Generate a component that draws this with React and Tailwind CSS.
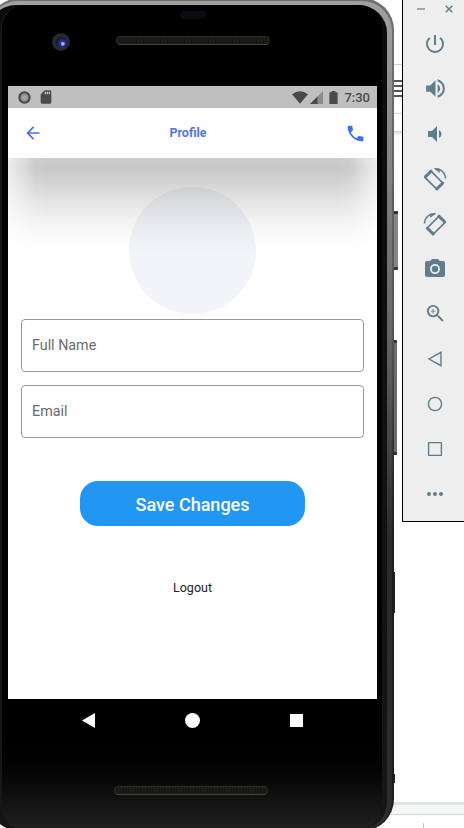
import React from "react";
import {
  MdPowerSettingsNew,
  MdVolumeUp,
  MdVolumeDown,
  MdCameraAlt,
  MdZoomIn,
  MdPhone,
  MdArrowBack,
  MdSdCard,
} from "react-icons/md";

function Speaker({ className }) {
  return (
    <div
      className={`h-[9px] w-[154px] rounded-full border border-[#2e2c26] border-b-[#47443b] bg-[#1a1915] bg-[repeating-linear-gradient(90deg,#211f1b_0_1px,#181713_1px_3px)] ${className}`}
    />
  );
}

function StatusBar() {
  return (
    <div className="flex h-[22px] items-center bg-[#bfbfbf] pl-[10px] pr-[7px] text-[#4a4a4a]">
      <svg width="13" height="13" viewBox="0 0 13 13">
        <circle cx="6.5" cy="6.5" r="5.2" fill="#8b8b8b" stroke="#4a4a4a" strokeWidth="2" />
        <circle cx="6.5" cy="6.5" r="2.6" fill="#a3a3a3" />
      </svg>
      <MdSdCard className="ml-[7px] h-[16px] w-[16px]" />
      <div className="ml-auto flex items-center">
        <svg width="16" height="13" viewBox="0 0 16 13">
          <path d="M0 3.2Q8-2.8 16 3.2L8 12.8Z" fill="#4a4a4a" />
        </svg>
        <svg className="ml-[2px]" width="13" height="13" viewBox="0 0 13 13">
          <path d="M13 0V13H0Z" fill="#8d8d8d" />
          <path d="M7.5 5.5V13H0Z" fill="#4a4a4a" />
        </svg>
        <svg className="ml-[6px]" width="9" height="13" viewBox="0 0 9 13">
          <path d="M2.5 0h4v1.3H8.6V13H.4V1.300H2.500Z" fill="#4a4a4a" />
        </svg>
        <span className="ml-[6px] pt-[1px] text-[13px] font-medium leading-[21px]">7:30</span>
      </div>
    </div>
  );
}

function Field({ label }) {
  return (
    <div className="flex h-[53px] items-center rounded-[4px] border border-[#999] px-[10px] text-[14.3px] text-[#6a6a6a]">
      {label}
    </div>
  );
}

function Screen() {
  return (
    <div className="flex h-[613px] w-[369px] flex-col overflow-hidden bg-white">
      <StatusBar />
      <div className="relative z-10 grid h-[50px] shrink-0 grid-cols-[80px_1fr_80px] items-center bg-white">
        <MdArrowBack className="ml-[15px] h-[20px] w-[20px] text-[#4e70ea]" />
        <span className="pr-[9px] text-center text-[12.5px] font-bold text-[#4f75ea]">Profile</span>
        <MdPhone className="ml-auto mr-[11px] h-[21px] w-[21px] text-[#3f70ee]" />
        <div className="pointer-events-none absolute inset-x-0 top-full h-[95px] bg-[linear-gradient(180deg,rgba(0,0,0,0.2)_0,rgba(0,0,0,0.22)_10px,rgba(0,0,0,0.18)_22px,rgba(0,0,0,0.11)_42px,rgba(0,0,0,0.05)_62px,rgba(0,0,0,0.015)_80px,transparent_95px)] [mask-image:linear-gradient(90deg,rgba(0,0,0,0.35)_0,rgba(0,0,0,0.6)_13px,rgba(0,0,0,0.93)_27px,#000_40px,#000_calc(100%-40px),rgba(0,0,0,0.93)_calc(100%-27px),rgba(0,0,0,0.6)_calc(100%-13px),rgba(0,0,0,0.35)_100%)]" />
      </div>
      <div className="mt-[29px] flex justify-center">
        <div className="mr-[1px] h-[127px] w-[127px] rounded-full bg-[#f2f4f9]" />
      </div>
      <div className="mt-[5px] flex flex-col gap-[13px] pl-[13px] pr-[13px]">
        <Field label="Full Name" />
        <Field label="Email" />
      </div>
      <button className="mt-[43px] h-[45px] w-[225px] self-center rounded-[18px] bg-[#2296f3] pt-[1px] text-[18px] font-medium text-white">
        Save Changes
      </button>
      <button className="mt-[52px] self-center text-[12.5px] leading-[20px] text-[#222]">Logout</button>
    </div>
  );
}

function NavBar() {
  return (
    <div className="flex h-[42px] w-[369px] items-center pl-[74px]">
      <svg width="13" height="15" viewBox="0 0 13 15">
        <path d="M13 0V15L0 7.500Z" fill="#fff" />
      </svg>
      <div className="ml-[90px] h-[15px] w-[15px] rounded-full bg-white" />
      <div className="ml-[90px] h-[13px] w-[13px] bg-white" />
    </div>
  );
}

function Phone() {
  return (
    <div className="absolute -left-[12px] -top-[2px] h-[833px] w-[406px] overflow-hidden rounded-[32px] bg-gradient-to-b from-[#707070] via-[#555] via-40% to-[#1c1c1c] to-65% pb-[1px] pr-[2px] pt-[3px]">
      <div className="h-full overflow-hidden rounded-[30px] bg-gradient-to-b from-[#a0a0a0] via-[#666] via-40% to-[#2b2b2b] to-65% pr-[5px] pt-[4px]">
        <div className="h-full rounded-[28px] bg-gradient-to-b from-[#0b0b0b] to-[#161616] pl-[12px] pr-[5px]">
          <div className="h-full rounded-[24px] border-l-2 border-l-[#171717] bg-gradient-to-b from-black from-87% to-[#222] pl-[6px]">
            <div className="flex h-[81px] items-start">
              <div className="ml-[44px] mt-[28px] flex h-[18px] w-[18px] items-center justify-center rounded-full bg-[#292929]">
                <div className="h-[11px] w-[11px] rounded-full bg-[radial-gradient(circle_at_62%_62%,#a6b3ff_0_12%,#29348d_25%,#0b0c2c_80%)]" />
              </div>
              <div className="ml-[46px] flex flex-col items-center pt-[6px]">
                <div className="h-[8px] w-[26px] rounded-full bg-[#0a0c14]" />
                <Speaker className="mt-[17px]" />
              </div>
            </div>
            <Screen />
            <NavBar />
            <Speaker className="ml-[106px] mt-[45px]" />
          </div>
        </div>
      </div>
    </div>
  );
}

function Rotate({ flip }) {
  return (
    <svg
      className={flip ? "-scale-x-100" : ""}
      width="24"
      height="24"
      viewBox="0 0 24 24"
      fill="none"
      stroke="currentColor"
    >
      <path d="M8 4.200L19.800 16L13.700 22.100L1.900 10.300Z" strokeWidth="1.700" strokeLinejoin="round" />
      <path d="M2.600 9.600L8 4.200M13.900 21.900L19.600 16.200" strokeWidth="3" strokeLinecap="round" />
      <path d="M12 2.200C17.500 1.200 22.300 5.500 22.500 11.500" strokeWidth="1.500" />
      <path d="M11.500 1.500L16.500 5.300L16.200 2Z" fill="currentColor" strokeWidth="0.800" />
    </svg>
  );
}

function Outline({ children }) {
  return (
    <svg width="18" height="18" viewBox="0 0 18 18" fill="none" stroke="currentColor" strokeWidth="1.400">
      {children}
    </svg>
  );
}

function Toolbar() {
  const tools = [
    <MdPowerSettingsNew className="h-[24px] w-[24px]" />,
    <MdVolumeUp className="h-[25px] w-[25px]" />,
    <MdVolumeDown className="h-[24px] w-[24px]" />,
    <Rotate />,
    <Rotate flip />,
    <MdCameraAlt className="h-[24px] w-[24px]" />,
    <MdZoomIn className="h-[23px] w-[23px]" />,
    <Outline><path d="M15 2.300V15.700L3 9Z" /></Outline>,
    <Outline><circle cx="9" cy="9" r="6.600" /></Outline>,
    <Outline><rect x="2.600" y="2.600" width="12.800" height="12.800" rx="0.500" /></Outline>,
    <svg width="18" height="6" viewBox="0 0 18 6" fill="currentColor">
      <circle cx="3" cy="3" r="2" />
      <circle cx="9" cy="3" r="2" />
      <circle cx="15" cy="3" r="2" />
    </svg>,
  ];
  return (
    <div className="absolute left-[402px] top-0 h-[522px] w-[62px] border-b border-l border-black bg-[#eee] text-[#607d8b]">
      <div className="flex h-[21px] items-center pb-[3px] pl-[14px]">
        <div className="h-[1.500px] w-[8px] bg-[#9aa9b0]" />
        <svg className="ml-[20px]" width="8" height="8" viewBox="0 0 8 8" stroke="currentColor" strokeWidth="1.500">
          <path d="M.7.7L7.300 7.300M7.300.7L.7 7.300" />
        </svg>
      </div>
      <div className="flex flex-col pl-[3px]">
        {tools.map((tool, i) => (
          <div key={i} className="flex h-[45px] items-center justify-center">{tool}</div>
        ))}
      </div>
    </div>
  );
}

function Backdrop() {
  return (
    <div className="flex h-full flex-col pl-[386px]">
      <div className="mt-[64px] h-px bg-[#cfcfcf]" />
      <div className="mt-[15px] flex flex-col gap-[3px]">
        <div className="h-[2px] bg-[#555]" />
        <div className="h-[2px] bg-[#555]" />
        <div className="h-[2px] bg-[#555]" />
        <div className="h-[2px] bg-[#555]" />
      </div>
      <div className="mt-[16px] h-[18px] border-t border-[#ddd] shadow-[0_2px_4px_rgba(0,0,0,0.2)]" />
      <div className="mt-auto h-[13px] border-b border-t-[3px] border-b-[#d5d7da] border-t-[#e2e4e7] bg-[#f6f7f9]" />
      <div className="ml-[37px] mt-[8px] h-[5px] w-px bg-[#c4c4c4]" />
    </div>
  );
}

export default function App() {
  return (
    <div className="relative h-[828px] w-[464px] overflow-hidden bg-white font-[Roboto,'Liberation_Sans',sans-serif]">
      <Backdrop />
      <div className="absolute left-[392px] top-[211px] h-[59px] w-[6px] rounded-r-[1px] border-y-[3px] border-[#333] bg-[#858585]" />
      <div className="absolute left-[392px] top-[340px] h-[115px] w-[5px] rounded-r-[1px] border-y-[3px] border-[#333] bg-[#6c6c6c]" />
      <div className="absolute left-[392px] top-[572px] h-[41px] w-[3px] bg-[#222]" />
      <div className="absolute left-[392px] top-[774px] h-[9px] w-[3px] bg-[#222]" />
      <Phone />
      <Toolbar />
    </div>
  );
}
